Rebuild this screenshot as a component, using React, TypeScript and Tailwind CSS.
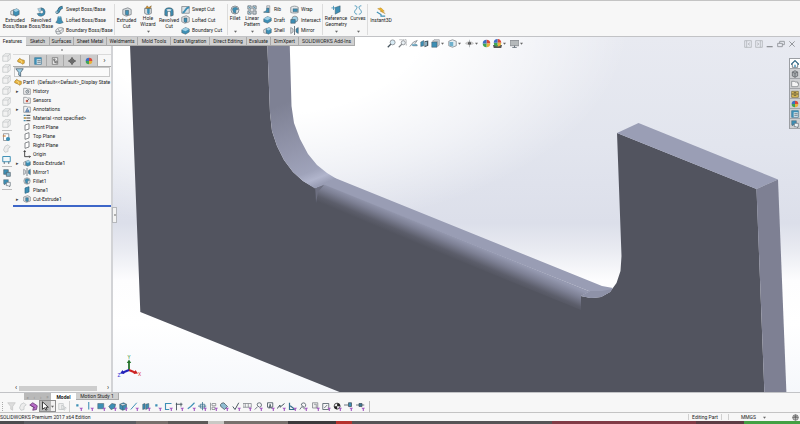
import { ReactNode } from 'react';
import clsx from 'clsx';

const B = '#3d8fb5';
const L = '#9fd0e6';
const D = '#44525c';
const G = '#7d8287';

// All glyphs are drawn on a 12x12 grid
const glyphs: Record<string, ReactNode> = {
  extrude: (
    <>
      <path d="M1 5l4-2v7l-4-1z" fill="#eee" stroke={G} />
      <path d="M4 4l4-2 3 2v5l-4 2-3-2z" fill={B} stroke={D} strokeWidth=".6" />
      <path d="M4 4l4-2 3 2-4 2z" fill={L} />
    </>
  ),
  revolve: (
    <>
      <path d="M6 1a5 5 0 1 1-4.6 7L5 7a2 2 0 1 0 1-3z" fill={B} stroke={D} strokeWidth=".5" />
      <path d="M2 2l4-1v4l-2 1z" fill={L} stroke={G} strokeWidth=".5" />
    </>
  ),
  sweep: (
    <>
      <path d="M2 10c5 0 1-6 8-7" fill="none" stroke={D} strokeWidth="4" />
      <path d="M2 10c5 0 1-6 8-7" fill="none" stroke={B} strokeWidth="2.8" />
      <circle cx="2.4" cy="9.6" r="1.6" fill={L} stroke={D} strokeWidth=".5" />
    </>
  ),
  loft: (
    <>
      <path d="M4 2h4l1 5 2 3-5 2-5-2 2-3z" fill={B} stroke={D} strokeWidth=".5" />
      <ellipse cx="6" cy="2.2" rx="2" ry="1" fill={L} />
    </>
  ),
  boundary: (
    <path d="M1 7c0-4 6-6 10-4v4c-2 3-7 5-9 3zM1 7c3 1 7 0 10-4M4 4l4 6" fill="#e8ebed" stroke={G} />
  ),
  cut: (
    <>
      <path d="M1 3l6-2 4 2v6l-6 2-4-2z" fill="#dfe3e6" stroke={G} />
      <path d="M4 4h4v5l-2 1-2-1z" fill={B} stroke={D} strokeWidth=".6" />
    </>
  ),
  hole: (
    <>
      <path d="M2 4h8v6l-4 2-4-2z" fill="#d5dade" stroke={G} />
      <path d="M5 4h3v6l-1.500 1L5 10z" fill={B} />
      <path d="M3 4l2-3 2 2 3-2-1 3z" fill="#e39b2f" stroke="#5b4a2c" strokeWidth=".5" />
    </>
  ),
  revcut: (
    <>
      <path d="M1 10V5a5 4 0 0 1 10 0v5l-3 1V7a2 2 0 0 0-4 0v4z" fill={B} stroke={D} strokeWidth=".7" />
      <path d="M3 3a5 3 0 0 1 6 0L7.500 5h-3z" fill="#dfe3e6" />
    </>
  ),
  sweepcut: (
    <>
      <path d="M1 2h10v9H1z" fill="#dfe3e6" stroke={G} />
      <path d="M2 10c5 0 2-6 9-7" fill="none" stroke={B} strokeWidth="2.600" />
    </>
  ),
  bluebox: (
    <>
      <path d="M1 5l5-3 5 2v4l-5 3-5-2z" fill={B} stroke={D} strokeWidth=".6" />
      <path d="M1 5l5-3 5 2-5 3z" fill={L} />
    </>
  ),
  fillet: (
    <>
      <circle cx="6" cy="6" r="4.800" fill="#e3e8eb" stroke={G} />
      <path d="M3 5c0-2 3-3 5-2l2 2-3 1v4l-3-1z" fill={B} stroke={D} strokeWidth=".5" />
    </>
  ),
  pattern: (
    <>
      <path d="M1 1h4v4H1zM7 1h4v4H7zM1 7h4v4H1zM7 7h4v4H7z" fill="#c9d0d5" stroke={D} strokeWidth=".7" />
      <path d="M2 2l2 2M8 2l2 2M2 8l2 2" stroke={B} />
    </>
  ),
  rib: (
    <>
      <path d="M5 1h4v9H5z" fill="#dfe3e6" stroke={G} strokeWidth=".8" />
      <path d="M1 9c3 0 4-2 4-5l3 0v6H1z" fill={B} stroke={D} strokeWidth=".5" />
    </>
  ),
  wrap: (
    <>
      <path d="M1 3c3-2 7-2 10 0v7c-3 1-7 1-10 0z" fill="#e3e8eb" stroke={G} />
      <path d="M4 5h6v4H4z" fill={B} stroke={D} strokeWidth=".5" />
    </>
  ),
  intersect: (
    <>
      <circle cx="6.500" cy="5.500" r="4" fill={L} stroke={G} />
      <path d="M1 6h6v5H1z" fill={B} stroke={D} strokeWidth=".7" />
    </>
  ),
  mirror: (
    <>
      <path d="M1 2l3 2v4l-3 2z" fill="#dfe3e6" stroke={G} />
      <path d="M6 0v12" stroke={D} />
      <path d="M11 2L8 4v4l3 2z" fill={B} stroke={D} strokeWidth=".7" />
    </>
  ),
  refgeo: (
    <>
      <path d="M5 3l6-2v7l-6 3z" fill={B} stroke={D} strokeWidth=".5" />
      <path d="M3 1v5M.5 3.500h5" stroke={B} />
    </>
  ),
  curves: (
    <path d="M2 1c4 0 3 3 1 5s-1 5 2 5M10 1c-4 0-3 3-1 5s1 5-2 5" fill="none" stroke={B} strokeWidth="1.100" />
  ),
  instant: (
    <>
      <path d="M2 2l4-1 4 4h-2l3 3-6-3h2z" fill="#f0b52c" stroke="#987022" strokeWidth=".4" />
      <path d="M1 6l5 3v2l5 0" fill="none" stroke={B} strokeWidth="1.400" />
    </>
  ),
  cube: <path d="M1 4h7v7H1zM1 4l3-3h7v7l-3 3M8 4l3-3" fill="#f2f2f2" stroke="#bcbfc1" strokeWidth=".9" />,
  search: (
    <>
      <circle cx="7.500" cy="4.500" r="3.300" fill="#d7ebf5" stroke={G} />
      <path d="M5 7l-4 4" stroke={D} strokeWidth="1.600" />
    </>
  ),
  searcharea: (
    <>
      <path d="M2 1h9v8" fill="none" stroke={G} strokeDasharray="1.500 1" />
      <circle cx="7" cy="5" r="2.800" fill="#e8eef2" stroke={G} />
      <path d="M5 7l-4 4" stroke={G} strokeWidth="1.500" />
    </>
  ),
  prev: (
    <>
      <path d="M1 10l5-6 5-2-3 4 3 3H5" fill="#e4e9ec" stroke={G} />
      <path d="M4 8h7" stroke={B} strokeWidth="1.500" />
    </>
  ),
  section: (
    <>
      <path d="M1 4l4-2v7l-4 1z" fill={B} stroke={D} strokeWidth=".6" />
      <path d="M6 3l5-1v7l-5 2z" fill={D} />
      <path d="M7 4l2-.5v5L7 9z" fill={L} />
    </>
  ),
  orient: (
    <>
      <path d="M4 1h7v7l-2 2V3H2z" fill="#dfe7eb" stroke={G} strokeWidth=".8" />
      <path d="M1 4h7v7H1z" fill={B} stroke={D} strokeWidth=".6" />
    </>
  ),
  display: (
    <>
      <path d="M1 3l5-2 5 2v6l-5 2-5-2z" fill="#e6eef2" stroke={G} />
      <path d="M2 4h5v6l-5-1z" fill="#6fb0cc" />
    </>
  ),
  eye: (
    <>
      <path d="M0 6c3-4 9-4 12 0-3 3-9 3-12 0z" fill="#c8c8c8" />
      <circle cx="6" cy="5.800" r="2" fill="#4a4a4a" />
      <path d="M6 1v10" stroke={G} strokeWidth=".7" />
    </>
  ),
  ball: (
    <>
      <path d="M6 6V1a5 5 0 0 1 5 5z" fill="#d9483b" />
      <path d="M6 6h5a5 5 0 0 1-5 5z" fill="#e8b13c" />
      <path d="M6 6v5a5 5 0 0 1-5-5z" fill="#3fa455" />
      <path d="M6 6H1a5 5 0 0 1 5-5z" fill="#3d6fc4" />
    </>
  ),
  scene: (
    <>
      <path d="M0 8h12l-1 4H1z" fill="#555" />
      <path d="M6 5V0a4.800 4.800 0 0 1 5 5z" fill="#d9483b" />
      <path d="M6 5h5a5 5 0 0 1-5 5z" fill="#e8b13c" />
      <path d="M6 5v5a5 5 0 0 1-5-5z" fill="#3fa455" />
      <path d="M6 5H1a5 5 0 0 1 5-5z" fill="#3d6fc4" />
    </>
  ),
  monitor: (
    <>
      <path d="M0 2h12v7H0z" fill="#b5b9bb" stroke={G} />
      <path d="M6 9v2M3 11.500h6" stroke={D} />
    </>
  ),
  dockLeft: <path d="M1 1h10v10H1zM4 1v10M9 4L6 6l3 2" fill="none" stroke="#a6a9ad" />,
  dockRight: <path d="M1 1h10v10H1zM8 1v10M3 4l3 2-3 2" fill="none" stroke="#a6a9ad" />,
  minimize: <path d="M1 10h9" stroke="#888b90" strokeWidth="1.800" />,
  restore: <path d="M1 5h7v5H1zM4 5V2h7v5H8" fill="none" stroke="#888b90" strokeWidth="1.200" />,
  close: <path d="M2 2l8 8M10 2l-8 8" stroke="#888b90" strokeWidth="1.300" />,
  home: (
    <>
      <path d="M2 6v5h8V6" fill="#fff" stroke={D} />
      <path d="M0 7l6-6 6 6" fill="none" stroke="#28617f" strokeWidth="1.800" />
      <path d="M5 7h2v4H5z" fill={B} />
    </>
  ),
  library: (
    <>
      <path d="M2 3l4-2 4 2v6l-4 2-4-2z" fill="#a9adb0" stroke="#565b5e" />
      <path d="M6 5v6M2 3l4 2 4-2" fill="none" stroke="#565b5e" />
    </>
  ),
  folder: <path d="M1 10V2h4l1 1h4v2h2l-2 5z" fill="#f4f4f4" stroke="#74797c" />,
  palette: (
    <>
      <path d="M1 2h10v9H1z" fill="#e1c15c" stroke="#716033" />
      <path d="M1 6h10M4 4h4M4 8h4" stroke="#4c4632" strokeWidth="1.200" />
    </>
  ),
  props: (
    <>
      <path d="M1 1h10v10H1z" fill="#dcebf3" stroke="#356d8b" />
      <path d="M1 1h10v2.500H1zM1 1h3v10H1z" fill={B} />
      <path d="M5 5.500h5M5 8h5" stroke={D} />
    </>
  ),
  forum: (
    <>
      <path d="M1 1h7v6H4L2 9V7H1z" fill={B} stroke={D} strokeWidth=".6" />
      <path d="M5 5h6v5h-1v2L8 10H5z" fill="#eef4f7" stroke={D} strokeWidth=".8" />
    </>
  ),
  part: (
    <>
      <path d="M1 5l3-3 3 2 4 1v4l-2 2-3-2-3-1-2-1z" fill="#e8b33b" stroke="#8f6c22" strokeWidth=".8" />
      <path d="M4 5l3 1v3" fill="none" stroke="#fbe6a5" />
    </>
  ),
  config: (
    <>
      <path d="M2 1h8v10H2z" fill="#ececec" stroke="#666" />
      <path d="M4 3h2v2H4zM7 6h2v3H7zM5 5v3h2" fill="none" stroke="#555" />
    </>
  ),
  target: (
    <>
      <circle cx="6" cy="6" r="3.300" fill="none" stroke="#333" strokeWidth="1.200" />
      <path d="M6 0v12M0 6h12" stroke="#333" strokeWidth="1.200" />
    </>
  ),
  funnel: <path d="M1 1h10L7.500 6v5L5 9.500V6z" fill={L} stroke="#345" strokeWidth=".9" />,
  history: (
    <>
      <path d="M1 11V2h4l1 1h5v8z" fill="#f3f3f3" stroke={G} />
      <circle cx="6.500" cy="7" r="2.300" fill="none" stroke={D} />
      <path d="M6.500 5.500V7H8" fill="none" stroke={D} strokeWidth=".7" />
    </>
  ),
  sensors: (
    <>
      <path d="M1 11V2h4l1 1h5v8z" fill="#f3f3f3" stroke={G} />
      <circle cx="6" cy="7.500" r="2" fill="#d25f4d" />
      <path d="M6 7.500l3-3" stroke={D} />
    </>
  ),
  annot: (
    <>
      <path d="M1 11V2h4l1 1h5v8z" fill="#f3f3f3" stroke={G} />
      <path d="M4 10l2.500-5L9 10zM5 8.500h3" fill="none" stroke="#2f5f9a" strokeWidth="1.100" />
    </>
  ),
  material: (
    <>
      <path d="M1 2h3M1 6h3M1 10h3" stroke="#4c8fb0" strokeWidth="2" />
      <path d="M5 2h6M5 6h6M5 10h6" stroke="#444" strokeWidth="1.500" />
      <circle cx="3" cy="6" r="1.500" fill="#d9a23b" />
    </>
  ),
  plane: <path d="M3 3l6-2v8l-6 2z" fill="#fff" stroke="#5d6266" strokeWidth="1.100" />,
  origin: <path d="M2.500 1v9H11M1 3l1.500-2L4 3M9.500 8.500L11 10l-1.500 1.500" fill="none" stroke="#222" strokeWidth="1.200" />,
  blueplane: <path d="M3 3l6-2v8l-6 2z" fill={B} stroke="#28617f" />,
  gray: <path d="M2 8l2-5 4-2 3 3-3 2v4l-4 1z" fill="#ececec" stroke="#c2c5c7" />,
  screen: (
    <>
      <path d="M1 2h10v7H1z" fill="#f1f6f8" stroke={B} strokeWidth="1.300" />
      <path d="M3 9v3M9 9v3" stroke={D} />
    </>
  ),
  stack: (
    <>
      <path d="M1 1h7v7H1z" fill={B} stroke={D} strokeWidth=".8" />
      <path d="M5 5h6v6H5z" fill="#7ab1c9" stroke={D} strokeWidth=".9" />
    </>
  ),
  sketchcfg: (
    <>
      <path d="M2 1h7v9H2z" fill="#fff" stroke={G} />
      <circle cx="8" cy="8" r="2.800" fill={B} />
      <path d="M1 4h4" stroke="#d47a2d" strokeWidth="1.400" />
    </>
  ),
  cursor: <path d="M3 1v9l2.500-2L7 11l1.500-.7L7 7.500h3z" fill="#fff" stroke="#222" />,
  graycursor: <path d="M1 2h6v8H1zM5 4v6l2-1 1 2 1.500-1L8 8h3z" fill="#eee" stroke="#c2c5c7" />,
  grayfunnel: <path d="M1 1h10L7.500 6v5L5 9.500V6z" fill="#ddd" stroke="#c5c5c5" />,
  purple: <path d="M1 4l4-3 6 4-1 5-5 1 1-4zM3 5l5 3" fill="#b66ac6" stroke="#64356f" />,
  globe: (
    <>
      <circle cx="6" cy="6" r="4.800" fill="#bbb" stroke="#555" />
      <path d="M1 6h10M6 1v10M3 3c2 2 4 2 6 0" fill="none" stroke="#555" />
    </>
  ),
};

// Selection filters, each finished with a small purple funnel
const filters: ReactNode[] = [
  <path key="0" d="M3 3h3v3H3z" fill={B} />,
  <path key="1" d="M5 0v10" stroke={B} strokeWidth="1.400" />,
  <path key="2" d="M1 2h8v7H1z" fill={B} stroke={D} strokeWidth=".6" />,
  <path key="3" d="M1 6l4-4 5 1-1 5-5 2z" fill={B} stroke={D} strokeWidth=".8" />,
  <path key="4" d="M1 3l5-2 4 2v6l-5 2-4-2zM1 3l4 2 5-2M5 5v6" fill={B} stroke={D} strokeWidth=".7" />,
  <path key="5" d="M1 10l8-9" stroke={B} strokeWidth="1.300" />,
  <path key="6" d="M1 3l3-1v7l-3 1zM5 3l4-1v6l-4 2z" fill={B} stroke={D} strokeWidth=".7" />,
  <path key="7" d="M3 3h3v3H3z" fill={B} />,
  <path key="8" d="M10 2H2v8h5" fill="none" stroke={B} strokeWidth="1.500" />,
  <path key="9" d="M2 1v10M1 3h9M8 1v5" fill="none" stroke={D} strokeWidth="1.200" />,
  <path key="10" d="M1 9l4-3 5-5" fill="none" stroke={B} strokeWidth="1.500" />,
  <path key="11" d="M6 0v11M0 5.500h11M3 3h6v5H3z" fill="none" stroke="#356d8b" />,
  <path key="12" d="M2 1v10M4 2h5v3H4zM4 7h4v3H4z" fill="none" stroke={G} />,
  <path key="13" d="M1 6a3 3 0 0 1 6-3l3 3-4 4z" fill="#8fbdd2" stroke={D} />,
  <path key="14" d="M1 6l3 4 5-9" fill="none" stroke={D} strokeWidth="1.300" />,
  <path key="15" d="M0 2h11v5H0zM3 2v5M7 2v5" fill="none" stroke={G} />,
  <path key="16" d="M1 10l4-4M4 4a3 3 0 1 1 3 3z" fill="none" stroke={D} />,
  <path key="17" d="M2 1h7v6H2zM4 9l1.500-6L7 9" fill="none" stroke={D} strokeWidth="1.100" />,
  <path key="18" d="M0 9l4-5v3l6-5" fill="none" stroke={D} strokeWidth="1.300" />,
  <path key="19" d="M2 1v9h7M3 5l5 4" fill="none" stroke="#356d8b" strokeWidth="1.600" />,
  <path key="20" d="M1 10l3-4 4 4M3 4a3 3 0 1 1 4 3z" fill="none" stroke={D} />,
  <path key="21" d="M2 1h7v7H2zM4 3h3v5" fill="#eee" stroke={G} />,
  <path key="22" d="M1 2h8v8H1zM3 8l4-4" fill="none" stroke={D} />,
  <g key="23">
    <circle cx="5.500" cy="5.500" r="4" fill="#eee" stroke="#222" />
    <path d="M5.500 5.500v-4a4 4 0 0 1 4 4zM5.500 5.500v4a4 4 0 0 1-4-4z" fill="#222" />
  </g>,
  <path key="24" d="M0 4h6M6 1h4v5H6z" fill={B} stroke={D} />,
  <path key="25" d="M0 4h11M4 2h4v4H4z" fill={B} stroke={D} />,
];

const bigColumns = {
  boss: [
    { lines: ['Extruded', 'Boss/Base'], icon: 'extrude', width: 'w-[26px]' },
    { lines: ['Revolved', 'Boss/Base'], icon: 'revolve', width: 'w-[26px]' },
  ],
  cut: [
    { lines: ['Extruded', 'Cut'], icon: 'cut', width: 'w-[23px]' },
    { lines: ['Hole', 'Wizard'], icon: 'hole', width: 'w-[20px]', menu: true },
    { lines: ['Revolved', 'Cut'], icon: 'revcut', width: 'w-[22px]' },
  ],
  feature: [
    { lines: ['Fillet'], icon: 'fillet', width: 'w-[14px]', menu: true },
    { lines: ['Linear', 'Pattern'], icon: 'pattern', width: 'w-[20px]', menu: true },
  ],
  reference: [
    { lines: ['Reference', 'Geometry'], icon: 'refgeo', width: 'w-[26px]', menu: true },
    { lines: ['Curves'], icon: 'curves', width: 'w-[18px]', menu: true },
  ],
  instant: [{ lines: ['Instant3D'], icon: 'instant', width: 'w-[26px]' }],
};

const tabs = [
  { label: 'Features', width: 'w-[26px]' },
  { label: 'Sketch', width: 'w-[24px]' },
  { label: 'Surfaces', width: 'w-[24px]' },
  { label: 'Sheet Metal', width: 'w-[33px]' },
  { label: 'Weldments', width: 'w-[31px]' },
  { label: 'Mold Tools', width: 'w-[33px]' },
  { label: 'Data Migration', width: 'w-[39px]' },
  { label: 'Direct Editing', width: 'w-[37px]' },
  { label: 'Evaluate', width: 'w-[24px]' },
  { label: 'DimXpert', width: 'w-[28px]' },
  { label: 'SOLIDWORKS Add-Ins', width: 'w-[56px]' },
];

const tree = [
  { label: 'History', icon: 'history', open: true },
  { label: 'Sensors', icon: 'sensors' },
  { label: 'Annotations', icon: 'annot', open: true },
  { label: 'Material <not specified>', icon: 'material' },
  { label: 'Front Plane', icon: 'plane' },
  { label: 'Top Plane', icon: 'plane' },
  { label: 'Right Plane', icon: 'plane' },
  { label: 'Origin', icon: 'origin' },
  { label: 'Boss-Extrude1', icon: 'extrude', open: true },
  { label: 'Mirror1', icon: 'mirror' },
  { label: 'Fillet1', icon: 'fillet' },
  { label: 'Plane1', icon: 'blueplane' },
  { label: 'Cut-Extrude1', icon: 'cut', open: true },
];

const hud = [
  { icon: 'search', label: 'Zoom to fit' },
  { icon: 'searcharea', label: 'Zoom to area' },
  { icon: 'prev', label: 'Previous view' },
  { icon: 'section', label: 'Section view' },
  { icon: 'orient', label: 'View orientation', menu: true },
  { icon: 'display', label: 'Display style', menu: true },
  { icon: 'eye', label: 'Hide/show items', menu: true },
  { icon: 'ball', label: 'Edit appearance' },
  { icon: 'scene', label: 'Apply scene', menu: true },
  { icon: 'monitor', label: 'View settings', menu: true },
];

// Windows taskbar, only its top edge is visible
const taskbar = [
  'w-[3%] bg-[#4c4c4e]',
  'w-[14%] bg-[#5b5e63]',
  'w-[4%] bg-[#77706c]',
  'w-[5%] bg-[#5c5a58]',
  'w-[2%] bg-[#c9c9c5]',
  'w-[8%] bg-[#77716d]',
  'w-[6%] bg-[#3c3a3c]',
  'w-[2%] bg-[#b5322d]',
  'w-[25%] bg-[#565456]',
  'w-[18%] bg-[#813b46]',
  'w-[6%] bg-[#5c3d44]',
  'grow bg-[#43a043]',
];

function Icon({ name, className = 'size-[9px]' }: { name: string; className?: string }) {
  return (
    <svg viewBox="0 0 12 12" className={clsx('shrink-0', className)} aria-hidden="true">
      {glyphs[name]}
    </svg>
  );
}

function Caret() {
  return (
    <svg viewBox="0 0 4 4" className="size-[3px] shrink-0" aria-hidden="true">
      <path d="M0 1h4L2 3.500z" fill="#666" />
    </svg>
  );
}

function BigButtons({ items }: { items: { lines: string[]; icon: string; width: string; menu?: boolean }[] }) {
  return (
    <div className="flex">
      {items.map((item) => (
        <button
          key={item.icon}
          className={clsx('flex flex-col items-center', item.width, item.menu ? 'pt-[1px]' : 'pt-[3px]')}
        >
          <Icon name={item.icon} className="size-[10px]" />
          {item.lines.map((line) => (
            <span key={line} className="whitespace-nowrap">{line}</span>
          ))}
          {item.menu && (
            <span className="mt-auto flex pb-[2px]">
              <Caret />
            </span>
          )}
        </button>
      ))}
    </div>
  );
}

function SmallButtons({ items, className }: { items: [string, string][]; className: string }) {
  return (
    <div className={clsx('flex flex-col justify-between pl-[1px]', className)}>
      {items.map(([label, icon]) => (
        <button key={label} className="flex h-[10px] items-center gap-[2px] whitespace-nowrap">
          <Icon name={icon} />
          {label}
        </button>
      ))}
    </div>
  );
}

function Divider() {
  return <div className="w-px shrink-0 bg-[#dcdcdc]" />;
}

function Ribbon() {
  return (
    <header className="flex h-[36px] shrink-0 border-t border-[#c4c4c4] bg-[#f7f7f7] pt-[3px] pb-[1px] pl-[2px]">
      <BigButtons items={bigColumns.boss} />
      <SmallButtons
        className="w-[60px]"
        items={[['Swept Boss/Base', 'sweep'], ['Lofted Boss/Base', 'loft'], ['Boundary Boss/Base', 'boundary']]}
      />
      <Divider />
      <BigButtons items={bigColumns.cut} />
      <SmallButtons
        className="w-[47px]"
        items={[['Swept Cut', 'sweepcut'], ['Lofted Cut', 'cut'], ['Boundary Cut', 'bluebox']]}
      />
      <Divider />
      <BigButtons items={bigColumns.feature} />
      <SmallButtons className="w-[27px]" items={[['Rib', 'rib'], ['Draft', 'bluebox'], ['Shell', 'extrude']]} />
      <SmallButtons className="w-[33px]" items={[['Wrap', 'wrap'], ['Intersect', 'intersect'], ['Mirror', 'mirror']]} />
      <Divider />
      <BigButtons items={bigColumns.reference} />
      <Divider />
      <BigButtons items={bigColumns.instant} />
    </header>
  );
}

function Scene() {
  return (
    <svg
      viewBox="0 36 800 358"
      preserveAspectRatio="xMinYMin slice"
      className="absolute inset-0 size-full"
      role="img"
      aria-label="Part model"
    >
      <defs>
        <linearGradient id="sky" x1="0" y1="36" x2="0" y2="394" gradientUnits="userSpaceOnUse">
          <stop offset="0" stopColor="#e8eaf1" />
          <stop offset=".3" stopColor="#e2e5ee" />
          <stop offset=".52" stopColor="#dcdfea" />
          <stop offset=".59" stopColor="#e8eaf1" />
          <stop offset=".68" stopColor="#fdfdfe" />
          <stop offset=".8" stopColor="#fff" />
          <stop offset="1" stopColor="#f5f7fb" />
        </linearGradient>
        <radialGradient id="glow" gradientTransform="translate(260 20) scale(370 210)" cx="0" cy="0" r="1" gradientUnits="userSpaceOnUse">
          <stop offset="0" stopColor="#fff" />
          <stop offset=".45" stopColor="#fff" />
          <stop offset=".75" stopColor="#fff" stopOpacity=".5" />
          <stop offset="1" stopColor="#fff" stopOpacity="0" />
        </radialGradient>
        <linearGradient id="wall" x1="290" y1="100" x2="322" y2="183" gradientUnits="userSpaceOnUse">
          <stop offset="0" stopColor="#7e8194" />
          <stop offset=".55" stopColor="#9497ad" />
          <stop offset=".82" stopColor="#9fa3ba" />
          <stop offset=".92" stopColor="#b1b5cc" />
          <stop offset="1" stopColor="#999db4" />
        </linearGradient>
        <linearGradient id="round" x1="450" y1="234" x2="442" y2="253" gradientUnits="userSpaceOnUse">
          <stop offset="0" stopColor="#9599b0" />
          <stop offset=".35" stopColor="#7d8094" />
          <stop offset=".75" stopColor="#5c5e6b" />
          <stop offset="1" stopColor="#52545f" />
        </linearGradient>
      </defs>
      <rect y="36" width="800" height="358" fill="url(#sky)" />
      <rect y="36" width="800" height="358" fill="url(#glow)" />

      <path
        d="M129.700 36L140.300 311L347 394H764.500L756.500 188L617 132L621.500 255L620.500 270L616.500 282L610 291L601 296L591 297L581 295L323 184L315 187L303 180L293 171L284 159L277 145L272 130L270 112L267 36z"
        fill="#52545f"
      />
      <path
        d="M267 36L270 112L272 130L277 145L284 159L293 171L303 180L315 187.500L324 184L336 177.500L327 172L317 164L308 153L300 138L294 122L291.500 105L289.500 36z"
        fill="url(#wall)"
      />
      <path d="M323 184L335 177L602 285L613 287L610 291L601 296L591 297L581 295L590 290.500z" fill="#999db4" />
      <path d="M581 295L590 290L602 290L612 288L610 291L601 296L591 297z" fill="#8e92a8" />
      <path d="M315.500 187.500L324 183.500L590 290.500L581 295V309L316 202z" fill="url(#round)" />
      <path d="M315.500 187.500L324 184L318 191L316 202z" fill="#6d6f80" />
      <path d="M617 132L638.500 122L778 178.500L756.500 188z" fill="#9a9eb5" />
      <path d="M756.500 188L778 178.500L786.500 394H764.500z" fill="#7e8093" />

      <path d="M129 369V360" stroke="#24722c" strokeWidth="1.800" />
      <path d="M126.800 362L129 358.500L131.200 362z" fill="#24722c" />
      <path d="M129 369L135 371.500" stroke="#c22" strokeWidth="2" />
      <path d="M133.500 373L138 372.500L135.500 369z" fill="#c22" />
      <path d="M129 369L123 371.500" stroke="#22b" strokeWidth="2" />
      <path d="M124.500 373L120 372.500L122.500 369z" fill="#22b" />
      <text x="127.500" y="358" fontSize="5" fill="#3a9a3a">Y</text>
      <text x="138" y="375" fontSize="5" fill="#e03c3c">X</text>
      <text x="117.500" y="376" fontSize="5" fill="#3a3ad8">Z</text>
    </svg>
  );
}

function SideStrip() {
  const rule = <div className="my-[1px] h-px w-[10px] bg-[#bdbdbd]" />;
  return (
    <aside className="flex w-[13px] shrink-0 flex-col items-center bg-[#f7f7f7] pt-[6px]">
      {[0, 1, 2, 3, 4, 5, 6].map((i) => (
        <button key={i} aria-label={`View ${i + 1}`} className="py-[1px]">
          <Icon name="cube" />
        </button>
      ))}
      {rule}
      {['sketchcfg', 'gray', 'screen'].map((name) => (
        <button key={name} aria-label={name} className="py-[1px]">
          <Icon name={name} />
        </button>
      ))}
      {rule}
      {['stack', 'forum'].map((name) => (
        <button key={name} aria-label={name} className="py-[1px]">
          <Icon name={name} className="size-[8px]" />
        </button>
      ))}
      {rule}
    </aside>
  );
}

function FeatureTree() {
  return (
    <section className="relative flex w-[100px] shrink-0 flex-col border-r-2 border-[#d2d3d6] bg-[#f7f7f7]">
      <div className="flex h-[9px] items-center justify-center border-b border-[#dadada]">
        <span className="size-[2px] rounded-full bg-[#999]" />
      </div>
      <div className="flex h-[12px] items-stretch border-b border-[#aaa]">
        {['part', 'props', 'config', 'target', 'ball'].map((name, i) => (
          <button
            key={name}
            aria-label={name}
            className={clsx(
              'flex w-[17px] items-center justify-center border-r border-[#a9a9a9]',
              i === 0 ? 'bg-[#f7f7f7]' : 'bg-[#cbcbcb]'
            )}
          >
            <Icon name={name} className="size-[8px]" />
          </button>
        ))}
        <button aria-label="More tabs" className="grow text-[8px] leading-[8px] text-[#333]">›</button>
      </div>
      <label className="mx-[1px] flex h-[10px] shrink-0 items-center border border-[#c8c8c8] bg-[#fafafa]">
        <Icon name="funnel" />
        <input aria-label="Filter tree" className="w-full min-w-0 bg-transparent outline-none" />
      </label>
      <div className="flex h-[9px] items-center gap-[1px] pl-[1px] whitespace-nowrap">
        <Icon name="part" className="size-[8px]" />
        <span>Part1&nbsp; (Default&lt;&lt;Default&gt;_Display State</span>
      </div>
      <ul className="border-b-2 border-[#3d66c8] pb-[2px]">
        {tree.map((node) => (
          <li key={node.label} className="flex h-[9px] items-center gap-[2px] whitespace-nowrap">
            <span className="w-[8px] pl-[3px] text-[#444]">{node.open && '▸'}</span>
            <Icon name={node.icon} className="size-[8px]" />
            {node.label}
          </li>
        ))}
      </ul>
      <div className="mt-auto flex h-[8px] items-center gap-[2px] px-[2px] text-[7px] leading-[7px]">
        <button aria-label="Scroll left">‹</button>
        <div className="h-[5px] w-[78px] bg-[#cdcdcd]" />
        <button aria-label="Scroll right" className="ml-auto">›</button>
      </div>
      <button
        aria-label="Collapse panel"
        className="absolute top-[161px] -right-[6px] flex h-[16px] w-[5px] items-center justify-center border border-[#b5b7bb] bg-[#f3f3f3]"
      >
        <span className="size-[2px] rounded-full bg-[#999]" />
      </button>
    </section>
  );
}

function HeadsUpBar() {
  return (
    <div className="flex h-[13px] grow items-center pl-[32px]">
      {hud.map((item) => (
        <button
          key={item.icon}
          aria-label={item.label}
          className={clsx('flex items-center justify-between', item.menu ? 'w-[17px] pr-[4px]' : 'w-[11px]')}
        >
          <Icon name={item.icon} />
          {item.menu && <Caret />}
        </button>
      ))}
      <div className="ml-auto flex gap-[3px] pr-[4px]">
        {['dockLeft', 'dockRight', 'minimize', 'restore', 'close'].map((name) => (
          <button key={name} aria-label={name}>
            <Icon name={name} className="size-[8px]" />
          </button>
        ))}
      </div>
    </div>
  );
}

function TaskPane() {
  return (
    <aside className="mt-[12px] ml-auto flex w-[11px] flex-col self-start border-t border-l border-[#9b9ea3]">
      {['home', 'library', 'folder', 'palette', 'ball', 'props', 'forum'].map((name, i) => (
        <button
          key={name}
          aria-label={name}
          className={clsx(
            'flex h-[10px] items-center justify-center border-b border-[#a4a6aa]',
            i === 0 ? 'bg-white' : 'bg-[#cfd0d2]'
          )}
        >
          <Icon name={name} className="size-[8px]" />
        </button>
      ))}
    </aside>
  );
}

function SelectionBar() {
  return (
    <div className="flex h-[13px] shrink-0 items-center border-b border-[#c4c4c4] bg-[#f7f7f7]">
      <div className="ml-[2px] h-[9px] border-l border-dotted border-[#aaa]" />
      <div className="flex items-center gap-[2px] pl-[4px]">
        {['grayfunnel', 'gray', 'purple'].map((name) => (
          <button key={name} aria-label={name}>
            <Icon name={name} />
          </button>
        ))}
      </div>
      <button
        aria-label="Select"
        className="ml-[1px] flex h-[12px] w-[17px] items-center justify-between border border-[#8f8f8f] bg-[#b9b9b9]"
      >
        <Icon name="cursor" className="size-[10px]" />
        <span className="flex h-full w-[4px] items-center bg-[#f2f2f2]">
          <Caret />
        </span>
      </button>
      <button aria-label="Select other" className="ml-[2px]">
        <Icon name="graycursor" />
      </button>
      <div className="ml-[2px] h-[11px] w-px bg-[#cfcfcf]" />
      <div className="ml-[4px] flex w-[291px] justify-between">
        {filters.map((shape, i) => (
          <button key={i} aria-label={`Selection filter ${i + 1}`}>
            <svg viewBox="0 0 12 12" className="size-[9px]" aria-hidden="true">
              {shape}
              <path d="M7 7.500h5l-1.500 2V12H9V9.500z" fill="#a65cc4" />
            </svg>
          </button>
        ))}
      </div>
      <div className="ml-[4px] h-[11px] w-px bg-[#bdbdbd]" />
    </div>
  );
}

export default function App() {
  return (
    <div className="flex h-screen flex-col overflow-hidden bg-[#f7f7f7] font-[Roboto,'Noto_Sans',sans-serif] text-[5px] leading-[6px] text-[#222]">
      <Ribbon />

      <main className="relative flex min-h-0 grow flex-col border-y border-[#c2c3c6]">
        <Scene />
        <div className="relative flex h-[9px] shrink-0 items-start">
          <nav className="flex h-[9px]">
            {tabs.map((tab, i) => (
              <button
                key={tab.label}
                className={clsx(
                  'border-r border-b whitespace-nowrap',
                  tab.width,
                  i === 0 ? 'border-[#f7f7f7] bg-[#f7f7f7]' : 'border-[#a9a9a9] bg-[#d0d0d0]'
                )}
              >
                {tab.label}
              </button>
            ))}
          </nav>
          <HeadsUpBar />
        </div>
        <div className="relative flex min-h-0 grow">
          <SideStrip />
          <FeatureTree />
          <TaskPane />
        </div>
      </main>

      <div className="flex h-[7px] shrink-0 items-stretch pl-[24px]">
        <div className="flex w-[27px] justify-around bg-[#b9b9b9] text-[#8a8a8a]">
          {['«', '‹', '›', '»'].map((mark) => (
            <button key={mark}>{mark}</button>
          ))}
        </div>
        <button className="w-[25px] bg-white font-bold">Model</button>
        <button className="w-[43px] border-r border-b border-[#aaa] bg-[#d0d0d0]">Motion Study 1</button>
      </div>

      <SelectionBar />

      <footer className="flex h-[8px] shrink-0 items-center">
        <span>SOLIDWORKS Premium 2017 x64 Edition</span>
        <span className="ml-auto border-x border-[#d0d0d0] px-[3px]">Editing Part</span>
        <span className="ml-[6px] border-l border-[#d0d0d0] pl-[12px]">MMGS</span>
        <span className="ml-[7px]">
          <Caret />
        </span>
        <span className="ml-[26px] pr-[1px]">
          <Icon name="globe" className="size-[7px]" />
        </span>
      </footer>
      <div className="flex h-[3px] shrink-0">
        {taskbar.map((segment) => (
          <span key={segment} className={segment} />
        ))}
      </div>
    </div>
  );
}
